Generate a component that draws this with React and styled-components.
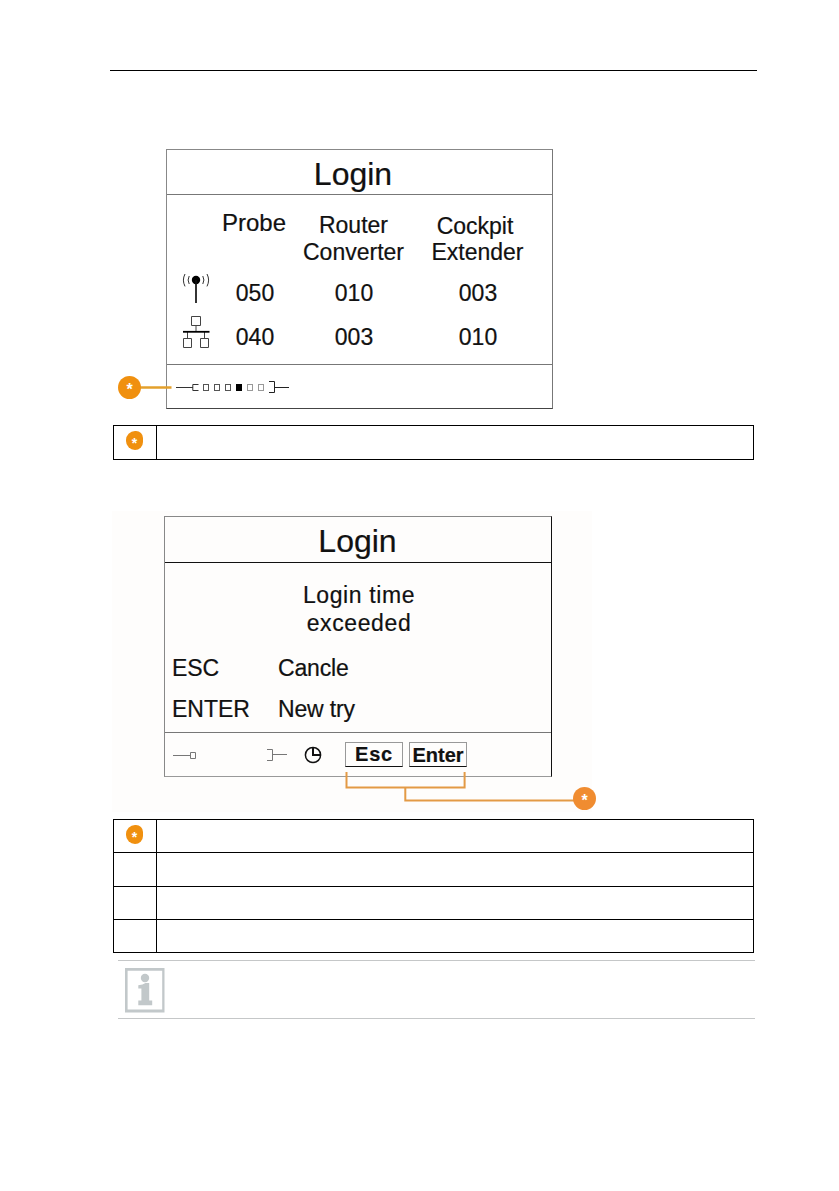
import styled, { createGlobalStyle } from "styled-components";

const GlobalStyle = createGlobalStyle`
  * {
    box-sizing: border-box;
  }
  body {
    margin: 0;
    background: #fff;
    color: #111;
    font-family: "Liberation Sans", Arial, sans-serif;
  }
  svg {
    display: block;
  }
`;

const bits = [27.5, 38.5, 49.5, 60.5, 71.5, 82.5];

function AntennaIcon() {
  return (
    <svg width="30" height="34" viewBox="0 0 30 34" fill="none" stroke="#111">
      <circle cx="15" cy="10" r="4.2" fill="#000" stroke="none" />
      <path d="M15 10V33" strokeWidth="1.7" />
      <path
        d="M4 4Q.8 10 4 16.4M8.2 6Q6 10 8.2 14M21.8 6Q24 10 21.8 14M26 4Q29.2 10 26 16.4"
        stroke="#333"
      />
    </svg>
  );
}

function NetworkIcon() {
  return (
    <svg width="30" height="34" viewBox="0 0 30 34" fill="none" stroke="#444">
      <path d="M10.5 1.5h9v9h-9zM2.5 23.5h8v9h-8zM19.5 23.5h8v9h-8z" />
      <path d="M15 10.5v6M6.5 16v7.5M23.5 16v7.5" />
      <path d="M2 16.8h26.5" stroke="#000" strokeWidth="1.8" />
    </svg>
  );
}

function LoginProgress() {
  return (
    <svg width="116" height="16" viewBox="0 0 116 16" fill="none" stroke="#555">
      <path d="M0 8.5H17M22.5 5.5H16.8V11.5H22.5" stroke="#333" />
      {bits.map((x, i) => (
        <rect
          key={x}
          x={x}
          y="5.5"
          width="5"
          height="6"
          fill={i === 3 ? "#000" : "none"}
          stroke={i === 3 ? "#000" : i > 3 ? "#999" : "#555"}
        />
      ))}
      <path d="M93 2.5H98.5V13.5H93M98.5 8.5H113" stroke="#222" />
    </svg>
  );
}

function EmptyProgress() {
  return (
    <svg width="116" height="16" viewBox="0 0 116 16" fill="none" stroke="#777">
      <path d="M0 8.5H17M17.5 5.5h5v6h-5zM94 2.5H99.5V13.5H94M99.5 7.5H114" />
    </svg>
  );
}

function ClockIcon() {
  return (
    <svg width="18" height="18" viewBox="0 0 18 18" fill="none" stroke="#111">
      <circle cx="9" cy="9" r="7.6" strokeWidth="1.5" />
      <path d="M9 1.5V9H16.5" strokeWidth="2" />
    </svg>
  );
}

function InfoIcon() {
  return (
    <svg width="40" height="45" viewBox="0 0 40 45" fill="#c2c8ca">
      <path d="M0 0H39.5V44.5H0zM2.6 2.8V41.6H37.2V2.8z" fillRule="evenodd" />
      <circle cx="20" cy="10" r="4.2" />
      <path d="M13.3 17.2Q18 17 20.5 15H24.2V32.5H27.2V37.3H13.3V32.5H16.4V20.5H13.3z" />
    </svg>
  );
}

function App() {
  return (
    <Page>
      <GlobalStyle />
      <TopRule />

      <Figure $top={78} $height={260}>
        <Display $left={54} $height={260}>
          <Title $shift={13}>Login</Title>
          <Body>
            <Devices>
              <Heading />
              <Heading $top={14} $size={24} $pull={2}>Probe</Heading>
              <Heading $top={17}>
                Router
                <br />
                Converter
              </Heading>
              <Heading $top={17}>
                <Nudge>Cockpit</Nudge>
                Extender
              </Heading>
              <IconCell $top={-2}><AntennaIcon /></IconCell>
              <Count>050</Count>
              <Count>010</Count>
              <Count>003</Count>
              <IconCell $top={0}><NetworkIcon /></IconCell>
              <Count $drop>040</Count>
              <Count $drop>003</Count>
              <Count $drop>010</Count>
            </Devices>
          </Body>
          <StatusBar $left={9} $height={44}>
            <LoginProgress />
          </StatusBar>
        </Display>
        <Callout width="60" height="24" viewBox="0 0 60 24">
          <path d="M20 11.5H59.5" stroke="#e3a02c" strokeWidth="2.3" />
        </Callout>
        <Badge $left={6} $top={227}>*</Badge>
      </Figure>

      <Table $top={16}>
        <TableRow $height={33}>
          <MarkCell><Blob>*</Blob></MarkCell>
          <TextCell />
        </TableRow>
      </Table>

      <Figure $top={51} $height={301} $tint>
        <Display $left={52} $top={5} $height={261} $dark>
          <Title $shift={1} $height={46} $dark>Login</Title>
          <Body $tall>
            <Message>
              <span>Login time</span>
              <span>exceeded</span>
            </Message>
            <Keys>
              <Key $spacing={-0.1}>ESC</Key>
              <Key $spacing={-0.15}>Cancle</Key>
              <Key>ENTER</Key>
              <Key $spacing={-0.15}>New try</Key>
            </Keys>
          </Body>
          <StatusBar $left={8} $height={44}>
            <EmptyProgress />
            <ClockSlot><ClockIcon /></ClockSlot>
            <SoftKey $spacing={0.8}>Esc</SoftKey>
            <SoftKey $drop>Enter</SoftKey>
          </StatusBar>
        </Display>
        <KeyCallout width="240" height="36" viewBox="0 0 240 36" fill="none">
          <path
            d="M2.5 2V17.5H120.6V2M61.3 17.5V30.5H231"
            stroke="#e39a45"
            strokeWidth="2"
          />
        </KeyCallout>
        <Badge $left={461} $top={276} $warm>*</Badge>
      </Figure>

      <Table $top={7}>
        <TableRow $height={33}>
          <MarkCell><Blob>*</Blob></MarkCell>
          <TextCell />
        </TableRow>
        <TableRow $height={34}>
          <MarkCell />
          <TextCell />
        </TableRow>
        <TableRow $height={33}>
          <MarkCell />
          <TextCell />
        </TableRow>
        <TableRow $height={32}>
          <MarkCell />
          <TextCell />
        </TableRow>
      </Table>

      <InfoBox>
        <InfoIcon />
      </InfoBox>
    </Page>
  );
}

const Page = styled.main`
  width: 839px;
  height: 1191px;
  padding-top: 70px;
  overflow: hidden;
`;

const TopRule = styled.hr`
  width: 647px;
  height: 1px;
  margin: 0 0 0 110px;
  border: 0;
  background: #000;
`;

const Figure = styled.section`
  position: relative;
  display: flow-root;
  width: 480px;
  height: ${(p) => p.$height}px;
  margin: ${(p) => p.$top}px 0 0 112px;
  background: ${(p) => (p.$tint ? "#fefdfc" : "#fff")};
  -webkit-text-stroke: 0.2px #111;
`;

const Display = styled.div`
  display: flex;
  flex-direction: column;
  width: ${(p) => (p.$dark ? 388 : 387)}px;
  height: ${(p) => p.$height}px;
  margin-left: ${(p) => p.$left}px;
  margin-top: ${(p) => p.$top || 0}px;
  border: 1px solid #888;
  border-right-color: ${(p) => (p.$dark ? "#111" : "#777")};
  border-bottom-color: ${(p) => (p.$dark ? "#999" : "#444")};
`;

const Title = styled.div`
  flex: none;
  height: ${(p) => p.$height || 45}px;
  padding-right: ${(p) => p.$shift}px;
  border-bottom: 1px solid ${(p) => (p.$dark ? "#111" : "#777")};
  font-size: 32px;
  line-height: 48px;
  text-align: center;
`;

const Body = styled.div`
  flex: 1;
  padding-top: ${(p) => (p.$tall ? 18 : 0)}px;
`;

const Devices = styled.div`
  display: grid;
  grid-template-columns: 57px 61px 137px 111px;
  grid-template-rows: 77px 43px 43px;
`;

const Heading = styled.div`
  display: flow-root;
  padding-top: ${(p) => p.$top || 0}px;
  margin-left: ${(p) => -(p.$pull || 0)}px;
  font-size: ${(p) => p.$size || 23}px;
  line-height: 27px;
  text-align: center;
  white-space: nowrap;
`;

const Nudge = styled.div`
  padding: 1px 5px 0 0;
  margin-bottom: -1px;
`;

const IconCell = styled.div`
  display: flex;
  justify-content: center;
  margin-top: ${(p) => p.$top}px;
`;

const Count = styled.div`
  padding-left: 1px;
  font-size: 23px;
  line-height: ${(p) => (p.$drop ? 45 : 43)}px;
  text-align: center;
`;

const StatusBar = styled.div`
  display: flex;
  align-items: center;
  height: ${(p) => p.$height}px;
  padding-left: ${(p) => p.$left}px;
  border-top: 1px solid #777;
`;

const Message = styled.div`
  display: flex;
  flex-direction: column;
  align-items: center;
  width: 388px;
  font-size: 23px;
  line-height: 28px;
  letter-spacing: 0.6px;
`;

const Keys = styled.div`
  display: grid;
  grid-template-columns: 106px 1fr;
  padding: 11px 0 0 7px;
`;

const Key = styled.div`
  font-size: 23px;
  line-height: 41px;
  letter-spacing: ${(p) => p.$spacing || 0}px;
`;

const ClockSlot = styled.div`
  width: 41px;
  margin-left: 15px;
`;

const SoftKey = styled.div`
  width: 58px;
  height: 25px;
  margin-right: 6px;
  border: 1px solid #999;
  border-bottom-color: #111;
  font-size: 20px;
  font-weight: bold;
  line-height: ${(p) => (p.$drop ? 25 : 23)}px;
  letter-spacing: ${(p) => p.$spacing || 0}px;
  text-align: center;
`;

const Callout = styled.svg`
  position: absolute;
  left: 0;
  top: 227px;
`;

const KeyCallout = styled.svg`
  position: absolute;
  left: 232px;
  top: 259px;
`;

const Badge = styled.div`
  position: absolute;
  left: ${(p) => p.$left}px;
  top: ${(p) => p.$top}px;
  width: 23px;
  height: 23px;
  border-radius: 50%;
  background: ${(p) => (p.$warm ? "#f08c30" : "#f0900f")};
  color: #fff;
  font-size: 16px;
  font-weight: bold;
  line-height: 28px;
  text-align: center;
  -webkit-text-stroke: 0;
`;

const Blob = styled.div`
  width: 17px;
  height: 19px;
  border-radius: 9px 7px 8px 9px;
  background: #f0900f;
  color: #fff;
  font-size: 14px;
  font-weight: bold;
  line-height: 24px;
  text-align: center;
`;

const Table = styled.div`
  width: 641px;
  margin: ${(p) => p.$top}px 0 0 113px;
  border: 1px solid #000;
`;

const TableRow = styled.div`
  display: grid;
  grid-template-columns: 43px 1fr;
  height: ${(p) => p.$height}px;
  border-bottom: 1px solid #000;

  &:last-child {
    border-bottom: 0;
  }
`;

const MarkCell = styled.div`
  padding: 5px 0 0 12px;
  border-right: 1px solid #000;
`;

const TextCell = styled.div``;

const InfoBox = styled.div`
  width: 637px;
  height: 59px;
  margin: 7px 0 0 118px;
  padding: 7px 0 0 7px;
  border-top: 1px solid #c5c7c8;
  border-bottom: 1px solid #c5c7c8;
`;

export default App;
